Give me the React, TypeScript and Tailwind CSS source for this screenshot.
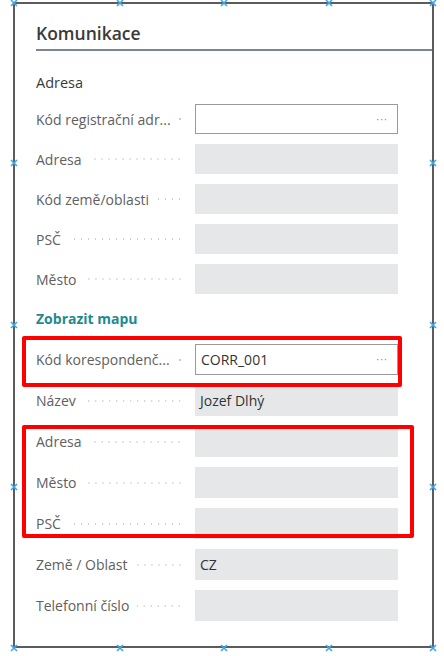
const font = {fontFamily: '"Open Sans", "Noto Sans", sans-serif'};

type Row = {label: string; value?: string; lookup?: boolean};

const addressRows: Row[] = [
  {label: "Kód registrační adr...", lookup: true},
  {label: "Adresa"},
  {label: "Kód země/oblasti"},
  {label: "PSČ"},
  {label: "Město"},
];

const Field = ({label, value, lookup, tall}: Row & {tall?: boolean}) => (
  <div className={`flex items-center ${tall ? "h-[31px]" : "h-[30px]"}`}>
    <div className="flex w-[147px] items-center">
      <span className="shrink-0 whitespace-nowrap text-[14px] text-[#606060]">{label}</span>
      <span className="ml-[8px] h-[2px] min-w-[4px] flex-1 bg-[radial-gradient(circle,#cbcbcb_0.9px,transparent_1.1px)] bg-[length:7px_2px] bg-[position:right_center] bg-repeat-x" />
    </div>
    <div
      className={`ml-[12px] flex h-full w-[203px] items-center justify-between px-[5px] text-[14px] text-[#333] ${
        lookup ? "border border-[#9a9a9a] bg-white" : "bg-[#e6e7e9]"
      }`}
    >
      <span>{value}</span>
      {lookup && <span className="pr-[4px] text-[11px] tracking-[1px] text-[#8a94a8]">···</span>}
    </div>
  </div>
);

const Marker = ({x, y}: {x: number; y: number}) => (
  <svg
    className="absolute"
    style={{left: x - 4, top: y - 4}}
    width="8"
    height="8"
    viewBox="0 0 8 8"
  >
    <path d="M1 1L7 7M7 1L1 7" stroke="#3aa7ea" strokeWidth="1.6" />
  </svg>
);

const markers = [
  ...[14, 120, 224, 329, 433].flatMap(x => [
    {x, y: 3},
    {x, y: 648},
  ]),
  ...[163, 325, 487].flatMap(y => [
    {x: 14, y},
    {x: 433, y},
  ]),
];

export default function App() {
  return (
    <div className="relative h-[656px] w-[444px] overflow-hidden bg-white" style={font}>
      <div className="pl-[13px] pt-[2px]">
        <div className="h-[646px] w-[421px] border-2 border-[#5c5c5c] pl-[21px]">
          <div className="mt-[17px] border-b-2 border-[#7d8491] pb-[4px] text-[17.5px] font-semibold leading-[24px] text-[#3a3a3a]">
            Komunikace
          </div>
          <div className="mt-[22px] text-[14.5px] font-medium leading-[20px] text-[#3a3a3a]">Adresa</div>
          <div className="mt-[11px] flex flex-col gap-[10px]">
            {addressRows.map(r => (
              <Field key={r.label} {...r} />
            ))}
          </div>
          <div className="mt-[15px] text-[14px] font-bold leading-[20px] text-[#1e8a90]">Zobrazit mapu</div>
          <div className="mt-[15px] flex flex-col gap-[10px]">
            <Field tall label="Kód korespondenč..." value="CORR_001" lookup />
            <Field tall label="Název" value="Jozef Dlhý" />
            <Field tall label="Adresa" />
            <Field tall label="Město" />
            <Field tall label="PSČ" />
            <Field tall label="Země / Oblast" value="CZ" />
            <Field tall label="Telefonní číslo" />
          </div>
        </div>
      </div>

      <div className="absolute left-[22px] top-[336px] h-[51px] w-[380px] rounded-[2px] border-4 border-[#ff0000]" />
      <div className="absolute left-[22px] top-[425px] h-[113px] w-[392px] rounded-[2px] border-4 border-[#ff0000]" />

      {markers.map(m => (
        <Marker key={`${m.x}-${m.y}`} x={m.x} y={m.y} />
      ))}
    </div>
  );
}
